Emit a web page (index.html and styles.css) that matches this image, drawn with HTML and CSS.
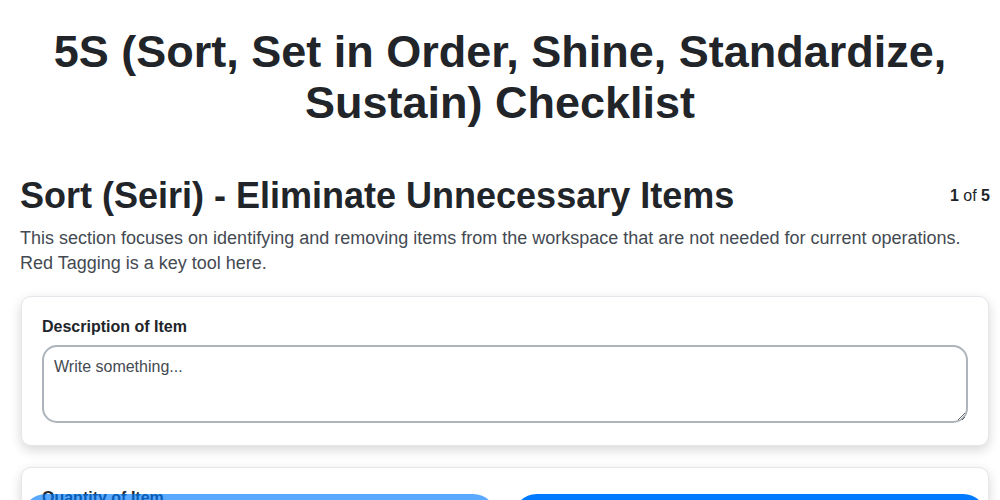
FILE: index.html
```html
<!DOCTYPE html>
<html lang="en">
<head>
<meta charset="utf-8">
<title>5S Checklist</title>
<link rel="stylesheet" href="styles.css">
</head>
<body>
<div class="page">
  <h1 class="title">5S (Sort, Set in Order, Shine, Standardize, Sustain) Checklist</h1>
  <div class="section-head">
    <h2 class="section-title">Sort (Seiri) - Eliminate Unnecessary Items</h2>
    <div class="counter"><b>1</b> of <b>5</b></div>
  </div>
  <p class="section-desc">This section focuses on identifying and removing items from the workspace that are not needed for current operations. Red Tagging is a key tool here.</p>
  <div class="card">
    <label class="field-label">Description of Item</label>
    <textarea class="field-text" placeholder="Write something..."></textarea>
  </div>
  <div class="card">
    <label class="field-label">Quantity of Item</label>
    <input class="field-input" type="number">
  </div>
</div>
<div class="nav-bar">
  <button class="nav-btn prev" disabled>Previous</button>
  <button class="nav-btn next">Next</button>
</div>
</body>
</html>
```
FILE: styles.css
```css
html, body {
  margin: 0;
  padding: 0;
  background: #ffffff;
  font-family: "Liberation Sans", Arial, sans-serif;
  color: #212529;
  overflow: hidden;
}
.page {
  padding: 0 11px 0 20px;
}
.title {
  margin: 0 -11px 0 -20px;
  padding-top: 26px;
  text-align: center;
  font-size: 45px;
  line-height: 51px;
  font-weight: 700;
  color: #212529;
}
.section-head {
  display: flex;
  justify-content: space-between;
  align-items: center;
  margin-top: 46px;
}
.section-title {
  margin: 0;
  font-size: 36px;
  line-height: 44px;
  font-weight: 700;
}
.counter {
  font-size: 16px;
  color: #212529;
  margin-right: -1px;
}
.section-desc {
  margin: 8px 0 0 0;
  font-size: 18px;
  line-height: 25px;
  color: #444a52;
}
.card {
  margin: 20px 0 0 1px;
  background: #fff;
  border: 1px solid #e6e6ec;
  border-radius: 10px;
  box-shadow: 0 4px 12px rgba(0, 0, 0, 0.16);
  padding: 20px 20px 22px 20px;
  display: flex;
  flex-direction: column;
}
.card + .card {
  margin-top: 21px;
}
.field-label {
  font-size: 16px;
  font-weight: 700;
  line-height: 20px;
  margin-bottom: 8px;
  color: #212529;
}
.field-text {
  height: 78px;
  box-sizing: border-box;
  border: 2px solid #adb4bb;
  border-radius: 15px;
  padding: 11px 10px 8px 10px;
  font-family: "Liberation Sans", Arial, sans-serif;
  font-size: 16px;
  color: #212529;
  resize: vertical;
}
.field-text::placeholder {
  color: #444a52;
}
.field-input {
  height: 44px;
  border: 2px solid #adb4bb;
  border-radius: 15px;
}
.nav-bar {
  position: fixed;
  left: 22px;
  right: 13px;
  top: 494px;
  display: flex;
  gap: 16px;
}
.nav-btn {
  flex: 1;
  height: 50px;
  border: none;
  border-radius: 24px;
  background: #007bff;
  color: #fff;
  font-family: "Liberation Sans", Arial, sans-serif;
  font-size: 18px;
}
.nav-btn.prev {
  opacity: 0.65;
}
```
